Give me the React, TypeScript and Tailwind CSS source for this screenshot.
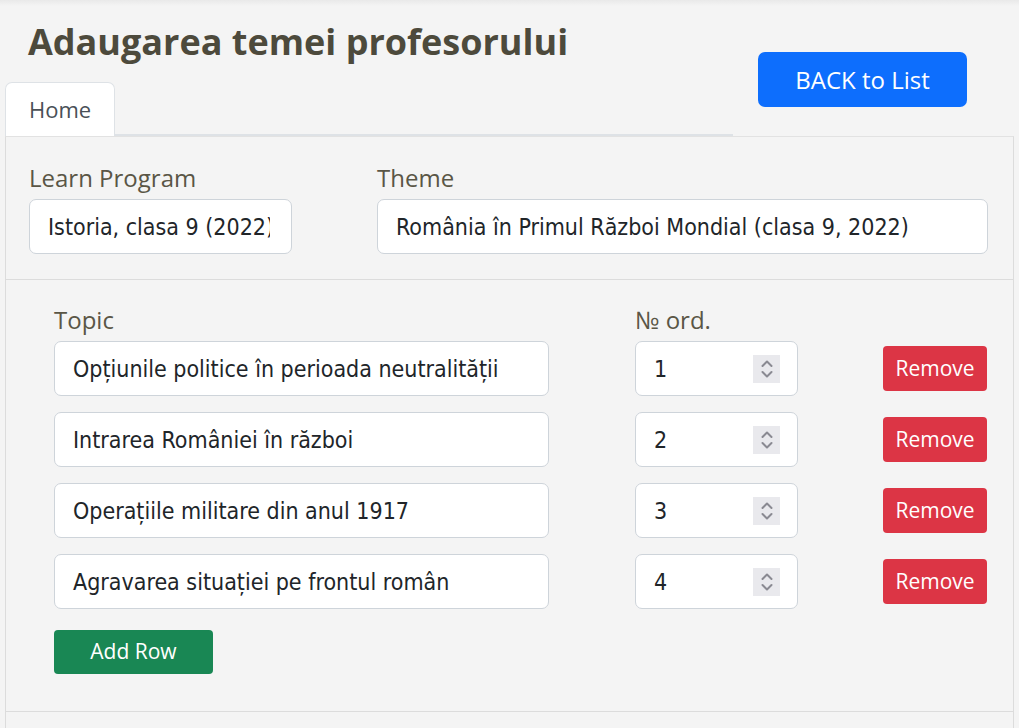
import React from "react";

const rows = [
  { topic: "Opțiunile politice în perioada neutralității", ord: 1 },
  { topic: "Intrarea României în război", ord: 2 },
  { topic: "Operațiile militare din anul 1917", ord: 3 },
  { topic: "Agravarea situației pe frontul român", ord: 4 },
];

const inputFont = { fontFamily: '"DejaVu Sans Condensed", sans-serif' };

function Spinner() {
  return (
    <div className="w-[27px] h-[28px] bg-[#e9e9ed] flex items-center justify-center">
      <svg width="14" height="22" viewBox="0 0 14 22" fill="none" stroke="#8a8a92" strokeWidth="2" strokeLinecap="round" strokeLinejoin="round">
        <path d="M2.5 8 L7 3.5 L11.5 8" />
        <path d="M2.5 14 L7 18.5 L11.5 14" />
      </svg>
    </div>
  );
}

export default function App() {
  return (
    <div className="min-h-screen bg-[#f4f4f4] text-[#5a5646]" style={{ fontFamily: '"Open Sans", sans-serif' }}>
      <div className="h-[6px] bg-gradient-to-b from-[#e9e9e9] to-[#f4f4f4]" />
      <div className="px-[5px]">
        <div className="flex">
          <div className="w-[728px]">
            <h1 className="pl-[23px] pt-[14px] text-[36px] leading-[44px] font-bold text-[#4d4a3c]">Adaugarea temei profesorului</h1>
            <div className="mt-[18px] h-[54px] border-b-2 border-[#dee2e6] flex">
              <div className="w-[110px] h-[54px] bg-white border border-b-0 border-[#dee2e6] rounded-t-[7px] pl-[23px] pt-[11px] text-[22px] leading-[30px] text-[#495057]">
                Home
              </div>
            </div>
          </div>
          <div className="flex-1 pl-[25px] pt-[46px]">
            <button className="w-[209px] h-[55px] bg-[#0d6efd] rounded-[7px] text-white text-[24px]">BACK to List</button>
          </div>
        </div>
        <div className="w-[1009px] border border-[#dcdcdc] border-t-[#e2e2e2] pb-[40px]">
          <div className="flex pl-[23px] pr-[25px] pt-[26px] pb-[25px] border-b border-[#dcdcdc]">
            <div className="w-[263px]">
              <div className="text-[24px] leading-[30px] mb-[6px]">Learn Program</div>
              <div className="h-[55px] bg-white border border-[#ced4da] rounded-[7px] pl-[18px] pt-[2px] flex items-center text-[23px] text-[#212529]" style={inputFont}>
                <span className="block w-[222px] overflow-hidden whitespace-nowrap">Istoria, clasa 9 (2022)</span>
              </div>
            </div>
            <div className="ml-[85px] flex-1">
              <div className="text-[24px] leading-[30px] mb-[6px]">Theme</div>
              <div className="h-[55px] bg-white border border-[#ced4da] rounded-[7px] pl-[18px] pt-[2px] flex items-center overflow-hidden whitespace-nowrap text-[23px] text-[#212529]" style={inputFont}>
                România în Primul Război Mondial (clasa 9, 2022)
              </div>
            </div>
          </div>
          <div className="pl-[48px] pr-[26px] pt-[25px] pb-[37px] border-b border-[#dcdcdc]">
            <div className="flex text-[24px] leading-[30px] mb-[6px]">
              <div className="w-[581px]">Topic</div>
              <div>№ ord.</div>
            </div>
            <div className="flex flex-col gap-[16px]">
              {rows.map((r) => (
                <div key={r.ord} className="flex items-center">
                  <div className="w-[495px] h-[55px] bg-white border border-[#ced4da] rounded-[7px] pl-[18px] pt-[2px] flex items-center whitespace-nowrap overflow-hidden text-[23px] text-[#212529]" style={inputFont}>
                    {r.topic}
                  </div>
                  <div className="ml-[86px] w-[163px] h-[55px] bg-white border border-[#ced4da] rounded-[7px] pl-[18px] pr-[17px] flex items-center justify-between text-[23px] text-[#212529]" style={inputFont}>
                    <span className="pt-[2px]">{r.ord}</span>
                    <Spinner />
                  </div>
                  <div className="flex-1 flex justify-end">
                    <button className="w-[104px] h-[45px] bg-[#dc3545] rounded-[4px] text-white text-[21px]">Remove</button>
                  </div>
                </div>
              ))}
            </div>
            <button className="mt-[21px] w-[159px] h-[44px] bg-[#198754] rounded-[4px] text-white text-[21px]">Add Row</button>
          </div>
        </div>
      </div>
    </div>
  );
}
